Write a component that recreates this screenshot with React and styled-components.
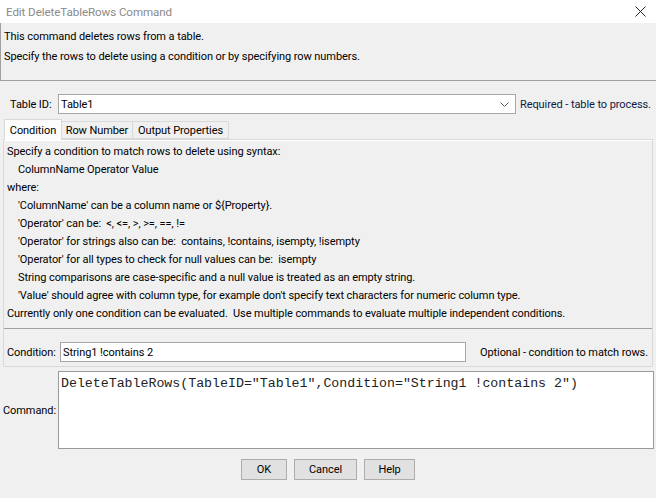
import React from "react";
import styled, { createGlobalStyle } from "styled-components";

const GlobalStyle = createGlobalStyle`
  body {
    margin: 0;
    background: #f0f0f0;
  }
  * {
    box-sizing: border-box;
  }
`;

const Window = styled.div`
  width: 656px;
  height: 498px;
  background: #f0f0f0;
  display: flex;
  flex-direction: column;
  overflow: hidden;
  font-family: Roboto, "Noto Sans", sans-serif;
  font-size: 11px;
  letter-spacing: -0.08px;
  color: #000;
`;

const TitleBar = styled.div`
  height: 23px;
  flex: none;
  background: #fff;
  display: flex;
  align-items: center;
  justify-content: space-between;
  padding: 0 10px 0 6px;
  color: #8a8a8a;
  font-size: 11.6px;
`;

const DescPanel = styled.div`
  height: 58px;
  flex: none;
  padding: 4px 0 0 3px;
  border-left: 1px solid #a0a0a0;
  border-bottom: 1px solid #a0a0a0;
  line-height: 20px;
`;

const FieldRow = styled.div`
  display: flex;
  align-items: center;
  height: 20px;
  flex: none;
`;

const TableIdRow = styled(FieldRow)`
  margin-top: 13px;
  padding-left: 10px;
`;

const Label = styled.span`
  width: ${(p) => p.w}px;
  flex: none;
  white-space: nowrap;
`;

const Combo = styled.div`
  width: 458px;
  height: 20px;
  background: #fff;
  border: 1px solid #a6a6a6;
  display: flex;
  align-items: center;
  justify-content: space-between;
  padding: 0 6px 0 2px;
`;

const Note = styled.span`
  margin-left: ${(p) => (p.right ? "auto" : "4px")};
  white-space: nowrap;
  color: ${(p) => (p.blue ? "#0d1a45" : "#000")};
`;

const TabArea = styled.div`
  margin: 5px 0 0 3px;
  width: 650px;
  flex: none;
`;

const TabStrip = styled.div`
  display: flex;
  height: 21px;
  padding-left: 1px;
  margin-bottom: -1px;
  position: relative;
  z-index: 1;
`;

const Tab = styled.div`
  width: ${(p) => p.w}px;
  height: ${(p) => (p.active ? 21 : 18)}px;
  margin-top: ${(p) => (p.active ? 0 : 2)}px;
  margin-left: ${(p) => (p.first ? 0 : -1)}px;
  border: 1px solid #d9d9d9;
  border-bottom: ${(p) => (p.active ? "none" : "1px solid #d9d9d9")};
  background: ${(p) => (p.active ? "#fcfcfc" : "#f0f0f0")};
  display: flex;
  align-items: center;
  justify-content: center;
  padding-top: ${(p) => (p.active ? 0 : 1)}px;
  white-space: nowrap;
`;

const TabPanel = styled.div`
  height: 228px;
  border: 1px solid #d9d9d9;
  box-shadow: inset 0 1px 0 #fff;
  display: flex;
  flex-direction: column;
`;

const HelpText = styled.div`
  padding: 3px 0 5px 3px;
  line-height: 18px;
  border-bottom: 1px solid #a0a0a0;
`;

const Line = styled.div`
  padding-left: ${(p) => (p.indent ? 11 : 0)}px;
  white-space: pre;
`;

const ConditionRow = styled(FieldRow)`
  margin-top: 13px;
  padding: 0 4px 0 3px;
`;

const TextInput = styled.div`
  width: ${(p) => p.w}px;
  height: 20px;
  background: #fff;
  border: 1px solid #a6a6a6;
  display: flex;
  align-items: center;
  padding-left: 2px;
`;

const CommandRow = styled.div`
  margin-top: 4px;
  display: flex;
  align-items: center;
  padding-left: 3px;
  flex: none;
`;

const CommandBox = styled.div`
  width: 596px;
  height: 78px;
  background: #fff;
  border: 1px solid #9a9a9a;
  padding: 4px 0 0 2px;
  font-family: "Liberation Mono", "Courier New", monospace;
  font-size: 13.25px;
  letter-spacing: 0;
  line-height: 16px;
  color: #222;
  white-space: pre;
`;

const ButtonRow = styled.div`
  margin-top: 10px;
  display: flex;
  justify-content: center;
  gap: 7px;
  flex: none;
`;

const Button = styled.div`
  width: ${(p) => p.w}px;
  height: 21px;
  background: #e1e1e1;
  border: 1px solid #adadad;
  display: flex;
  align-items: center;
  justify-content: center;
`;

const CloseIcon = () => (
  <svg width="11" height="11" viewBox="0 0 11 11">
    <path d="M0.5 0.5 L10.5 10.5 M10.5 0.5 L0.5 10.5" stroke="#222" strokeWidth="1" fill="none" />
  </svg>
);

const Chevron = () => (
  <svg width="9" height="5" viewBox="0 0 9 5">
    <path d="M0.5 0.5 L4.5 4.5 L8.5 0.5" stroke="#606060" strokeWidth="1" fill="none" />
  </svg>
);

const helpLines = [
  { t: "Specify a condition to match rows to delete using syntax:" },
  { t: "ColumnName Operator Value", indent: true },
  { t: "where:" },
  { t: "'ColumnName' can be a column name or ${Property}.", indent: true },
  { t: "'Operator' can be:  <, <=, >, >=, ==, !=", indent: true },
  { t: "'Operator' for strings also can be:  contains, !contains, isempty, !isempty", indent: true },
  { t: "'Operator' for all types to check for null values can be:  isempty", indent: true },
  { t: "String comparisons are case-specific and a null value is treated as an empty string.", indent: true },
  { t: "'Value' should agree with column type, for example don't specify text characters for numeric column type.", indent: true },
  { t: "Currently only one condition can be evaluated.  Use multiple commands to evaluate multiple independent conditions." },
];

export default function App() {
  return (
    <>
      <GlobalStyle />
      <Window>
        <TitleBar>
          <span>Edit DeleteTableRows Command</span>
          <CloseIcon />
        </TitleBar>
        <DescPanel>
          <div>This command deletes rows from a table.</div>
          <div>Specify the rows to delete using a condition or by specifying row numbers.</div>
        </DescPanel>
        <TableIdRow>
          <Label w={48}>Table ID:</Label>
          <Combo>
            <span>Table1</span>
            <Chevron />
          </Combo>
          <Note blue>Required - table to process.</Note>
        </TableIdRow>
        <TabArea>
          <TabStrip>
            <Tab w={58} active first>Condition</Tab>
            <Tab w={72}>Row Number</Tab>
            <Tab w={97}>Output Properties</Tab>
          </TabStrip>
          <TabPanel>
            <HelpText>
              {helpLines.map((l, i) => (
                <Line key={i} indent={l.indent}>{l.t}</Line>
              ))}
            </HelpText>
            <ConditionRow>
              <Label w={53}>Condition:</Label>
              <TextInput w={406}>String1 !contains 2</TextInput>
              <Note right>Optional - condition to match rows.</Note>
            </ConditionRow>
          </TabPanel>
        </TabArea>
        <CommandRow>
          <Label w={55}>Command:</Label>
          <CommandBox>{'DeleteTableRows(TableID="Table1",Condition="String1 !contains 2")'}</CommandBox>
        </CommandRow>
        <ButtonRow>
          <Button w={46}>OK</Button>
          <Button w={63}>Cancel</Button>
          <Button w={51}>Help</Button>
        </ButtonRow>
      </Window>
    </>
  );
}
